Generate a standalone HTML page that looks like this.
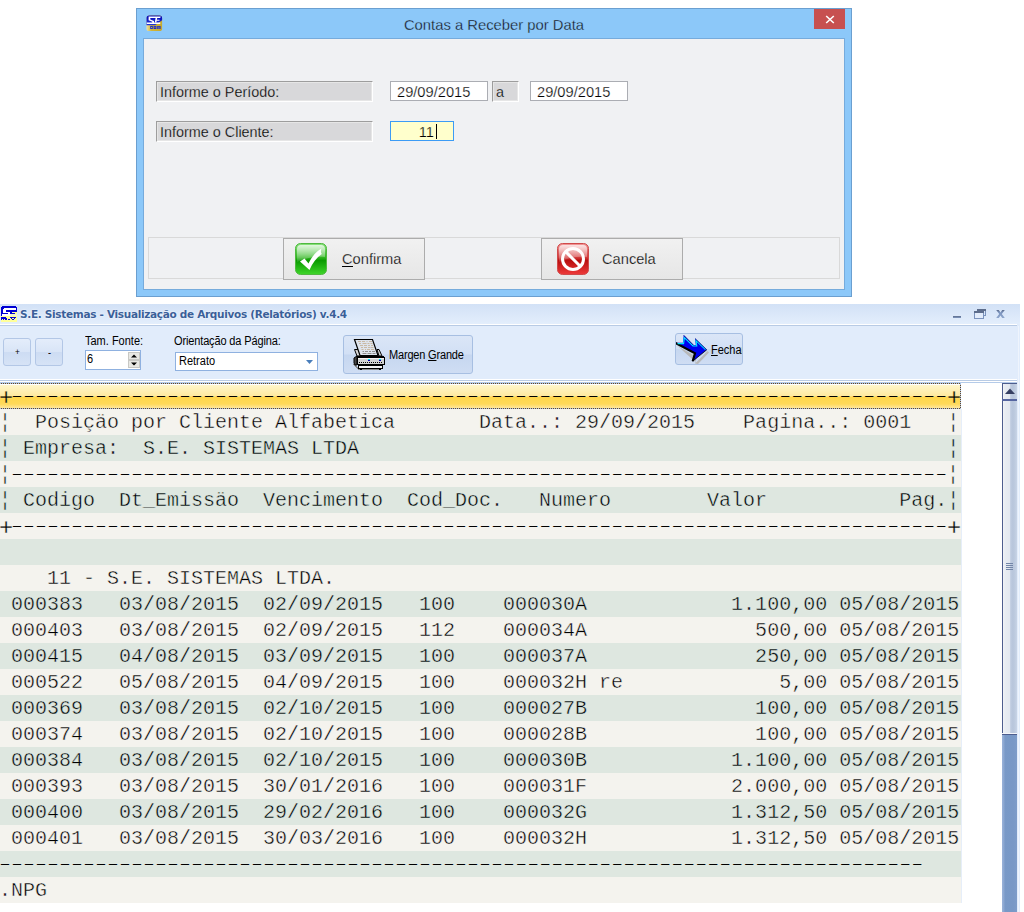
<!DOCTYPE html>
<html lang="pt-BR">
<head>
<meta charset="utf-8">
<title>Contas a Receber por Data</title>
<style>
*{box-sizing:border-box;margin:0;padding:0}
html,body{width:1024px;height:912px;overflow:hidden;background:#fff}
body{position:relative;font-family:"Liberation Sans",Arial,sans-serif;color:#000}
.abs{position:absolute}
/* ---------- dialog ---------- */
#dlg{position:absolute;left:136px;top:8px;width:716px;height:289px;background:#8cc8f9;border:1px solid #6b9fd0}
#dlg .inner{position:absolute;left:6px;top:29px;width:702px;height:252px;background:#f0f1f3;border:1px solid #76abdc}
#dlg .ttl{position:absolute;left:0;top:7px;width:714px;text-align:center;font-size:14.8px;line-height:18px;color:#111;letter-spacing:0;-webkit-text-stroke:0.3px #8cc8f9}
#dlg .close{position:absolute;left:677px;top:0;width:31px;height:20px;background:#c75050}
.sunk{position:absolute;background:#d8d8da;border:1px solid;border-color:#9d9d9d #fff #fff #9d9d9d;box-shadow:inset 1px 1px 0 #e6e6e6, inset -1px -1px 0 #e6e6e6;font-size:14.4px;line-height:21px;padding-left:3px;white-space:nowrap;-webkit-text-stroke:0.25px #d8d8da}
.edit{position:absolute;background:#fff;border:1px solid #abadb3;font-size:14.67px;line-height:20px;white-space:nowrap;-webkit-text-stroke:0.25px #fff}
.panel{position:absolute;border:1px solid #d9d9d9}
.btn{position:absolute;border:1px solid #acacac;background:linear-gradient(#f1f1f1,#e6e6e6);font-size:14.67px}
.btn span{position:absolute;top:11px;line-height:18px;-webkit-text-stroke:0.25px #ebebeb}
.btn u{text-decoration:none;display:inline-block;line-height:13px;border-bottom:1px solid #000}
/* ---------- viewer window ---------- */
#win{position:absolute;left:0;top:304px;width:1020px;height:608px;background:#e1ecfb;overflow:hidden}
#tbar{position:absolute;left:0;top:0;width:1020px;height:20px;background:linear-gradient(#d2e1f6,#e3eefc)}
#tbar .t{position:absolute;left:20px;top:3px;font-family:"DejaVu Sans","Liberation Sans",sans-serif;font-weight:bold;font-size:10.5px;line-height:14px;color:#3a5f99;white-space:nowrap;letter-spacing:-0.31px;text-shadow:0 0 2px #fff}
.lbl{position:absolute;font-size:12px;line-height:13px;white-space:nowrap;color:#000;transform:scaleX(.917);transform-origin:0 0}
.tbtn{position:absolute;border:1px solid #b3c7e6;border-radius:3px;background:linear-gradient(#e4edfb 0%,#d9e5f7 48%,#cddcf3 52%,#d6e3f6 100%)}
#rep{position:absolute;left:0;top:79px;width:1002px;height:529px;background:#fff;overflow:hidden}
.r{position:absolute;left:0;width:961px;height:26px;font-family:"Liberation Mono","DejaVu Sans Mono",monospace;font-size:20px;line-height:28px;white-space:pre;color:#000;text-indent:-1px;overflow:hidden}
.r.c{background:#f4f3ee;-webkit-text-stroke:0.45px #f4f3ee}
.r.g{background:#dee7e0;-webkit-text-stroke:0.45px #dee7e0}
.r.sel{-webkit-text-stroke:0.45px #ffe28a}
.d{display:inline-block;white-space:pre;letter-spacing:-4px;transform:translate(-3px,-0.5px) scale(1.5,0.55);transform-origin:0 13px;text-indent:0;-webkit-text-stroke:0 transparent}
.p{-webkit-text-stroke-width:0.25px;display:inline-block;transform:translate(1px,2px) scale(1.18);transform-origin:50% 50%;text-indent:0}
.r.sel{background:linear-gradient(#fff 0,#fff 2px,#fff6cb 2px,#ffe99f 13px,#ffd64b 14px,#ffd95a 21px,#ffe79c 25px,#fff3c8 26px)}
#fr{position:absolute;left:-1px;top:383px;width:962px;height:26px;background:
 repeating-linear-gradient(90deg,#6b4a1e 0,#6b4a1e 1px,#aac4e8 1px,#aac4e8 2px) 0 0/100% 1px no-repeat,
 repeating-linear-gradient(90deg,#6b4a1e 0,#6b4a1e 1px,#aac4e8 1px,#aac4e8 2px) 0 100%/100% 1px no-repeat,
 repeating-linear-gradient(#6b4a1e 0,#6b4a1e 1px,#aac4e8 1px,#aac4e8 2px) 0 0/1px 100% no-repeat,
 repeating-linear-gradient(#6b4a1e 0,#6b4a1e 1px,#aac4e8 1px,#aac4e8 2px) 100% 0/1px 100% no-repeat}
</style>
</head>
<body>

<!-- ================= dialog ================= -->
<div id="dlg">
  <svg class="abs" style="left:9px;top:6px" width="17" height="17" viewBox="0 0 17 17">
    <defs><linearGradient id="gd" x1="0" y1="0" x2="1" y2="0"><stop offset="0" stop-color="#efe3a4"/><stop offset="0.3" stop-color="#d2b63a"/><stop offset="1" stop-color="#c5a92e"/></linearGradient>
    <linearGradient id="bl" x1="0" y1="0" x2="0" y2="1"><stop offset="0" stop-color="#0208b4"/><stop offset="1" stop-color="#2236dc"/></linearGradient></defs>
    <rect x="0.5" y="0.5" width="15.6" height="15.6" rx="2.6" fill="url(#gd)"/>
    <path d="M0.5 3.1a2.6 2.6 0 0 1 2.6-2.6h10.4a2.6 2.6 0 0 1 2.6 2.6V5.2L9.2 10.2H0.5z" fill="url(#bl)"/>
    <g fill="#fff">
      <path d="M2.6 1.6H14.8L14.2 3.1H4.3V4.5L8 5.9V7.6H14.2V8.9H0.8V7.6H6.3V6.7L2.6 5.3z"/>
      <path d="M9.6 3.1h1.6L10.4 7.6H8.8z M10.9 4.7h2.6v1h-2.8z"/>
    </g>
    <g fill="#1a2ccc"><rect x="4.2" y="11" width="2.6" height="3"/><rect x="7.6" y="11" width="2.8" height="3"/><rect x="11.2" y="11" width="3.4" height="3"/></g>
    <g fill="#d2b63a"><rect x="5" y="12" width="1" height="1"/><rect x="8.5" y="11.8" width="1" height="0.8"/><rect x="12.2" y="11.8" width="1.4" height="0.7"/><rect x="12.2" y="13" width="1.4" height="0.5"/></g>
  </svg>
  <div class="ttl">Contas a Receber por Data</div>
  <div class="close">
    <svg class="abs" style="left:11px;top:6px" width="10" height="9" viewBox="0 0 10 9"><path d="M1.2 1 L8.8 8 M8.8 1 L1.2 8" stroke="#fff" stroke-width="1.6" fill="none"/></svg>
  </div>
  <div class="inner"></div>
</div>

<div class="sunk" style="left:156px;top:81px;width:217px;height:21px">Informe o Período:</div>
<div class="sunk" style="left:156px;top:121px;width:217px;height:21px">Informe o Cliente:</div>
<div class="edit" style="left:390px;top:81px;width:98px;height:20px;padding-left:6px">29/09/2015</div>
<div class="sunk" style="left:492px;top:81px;width:27px;height:21px">a</div>
<div class="edit" style="left:530px;top:81px;width:98px;height:20px;padding-left:6px">29/09/2015</div>
<div class="edit" style="left:390px;top:121px;width:64px;height:20px;border-color:#3c9bf5;background:#ffffcc;text-align:right;padding-right:19px;-webkit-text-stroke-color:#ffffcc">11</div>
<div class="abs" style="left:436px;top:124px;width:1px;height:15px;background:#000"></div>

<div class="panel" style="left:148px;top:237px;width:692px;height:42px"></div>
<div class="btn" style="left:283px;top:238px;width:142px;height:42px">
  <svg class="abs" style="left:11px;top:4px" width="32" height="32" viewBox="0 0 32 32">
    <defs>
      <linearGradient id="gg" x1="0" y1="0" x2="0" y2="1"><stop offset="0" stop-color="#8be27e"/><stop offset="0.45" stop-color="#2fb51f"/><stop offset="0.55" stop-color="#0a9a00"/><stop offset="1" stop-color="#3fd62a"/></linearGradient>
      <linearGradient id="gs" x1="0" y1="0" x2="0" y2="1"><stop offset="0" stop-color="#fff" stop-opacity="0.75"/><stop offset="1" stop-color="#fff" stop-opacity="0.1"/></linearGradient>
    </defs>
    <rect x="0.5" y="0.5" width="31" height="31" rx="5" fill="url(#gg)" stroke="#4fb83f"/>
    <path d="M2 6a4 4 0 0 1 4-4h20a4 4 0 0 1 4 4v8C20 13 10 15 2 19z" fill="url(#gs)"/>
    <path d="M5 18.5 L9.5 15.5 L13.5 20.5 C16.5 14 21 8.5 26.5 5.5 C25.5 8 25.8 9.5 26.8 11 C21.5 14.5 17.5 20 14.5 27 Z" fill="#fff"/>
  </svg>
  <span style="left:58px"><u>C</u>onfirma</span>
</div>
<div class="btn" style="left:541px;top:238px;width:142px;height:42px">
  <svg class="abs" style="left:15px;top:4px" width="32" height="32" viewBox="0 0 32 32">
    <defs>
      <linearGradient id="rg" x1="0" y1="0" x2="0" y2="1"><stop offset="0" stop-color="#f29a9a"/><stop offset="0.45" stop-color="#d23a3a"/><stop offset="0.55" stop-color="#b80f0f"/><stop offset="1" stop-color="#ee3a3a"/></linearGradient>
    </defs>
    <rect x="0.5" y="0.5" width="31" height="31" rx="5" fill="url(#rg)" stroke="#d04a4a"/>
    <path d="M2 6a4 4 0 0 1 4-4h20a4 4 0 0 1 4 4v8C20 13 10 15 2 19z" fill="url(#gs)"/>
    <circle cx="16" cy="16" r="10.5" fill="none" stroke="#fff" stroke-width="3"/>
    <path d="M8.8 8.8 L23.2 23.2" stroke="#fff" stroke-width="3"/>
  </svg>
  <span style="left:60px">Cancela</span>
</div>

<!-- ================= viewer window ================= -->
<div id="win">
  <div id="tbar">
    <svg class="abs" style="left:1px;top:2px" width="16" height="16" viewBox="0 0 16 16" shape-rendering="crispEdges">
      <rect x="0" y="5" width="16" height="11" fill="#ffff99"/>
      <path d="M1 0h14v1h1v5H11v4H0V1h1z" fill="#0000d4"/>
      <path d="M3 2h12v2H11v0H5v2h4v4H1V8h6V7H2V3h1z" fill="#fff"/>
      <path d="M10 5h5v1h-5z M10 7h4v1h-4z" fill="#0000d4"/>
      <path d="M9 8h7v2H9z" fill="#f4f4d0"/>
      <path d="M0 11h5v1h1v2H0z" fill="#0000d4"/>
      <path d="M7 13h2v1H7z M9 11h6v1H9z M10 12h1v1h-1z M13 12h1v1h-1z M11 13h1v1h-1z M12 13h1v1h-1z" fill="#0000d4"/>
      <path d="M1 13h1v1H1z M3 13h1v1H3z" fill="#ffff99"/>
    </svg>
    <div class="t">S.E. Sistemas - Visualização de Arquivos (Relatórios) v.4.4</div>
    <!-- window controls -->
    <div class="abs" style="left:953px;top:12px;width:8px;height:2px;background:linear-gradient(#5d6d8c,#8098c0)"></div>
    <svg class="abs" style="left:974px;top:5px" width="12" height="10" viewBox="0 0 12 10" shape-rendering="crispEdges">
      <rect x="3.5" y="0.5" width="8" height="6" fill="none" stroke="#7b93bd"/><rect x="3" y="0" width="9" height="2" fill="#5d6d8c"/>
      <rect x="0.5" y="2.5" width="9" height="7" fill="#e2ecfb" stroke="#7b93bd"/><rect x="0" y="2" width="10" height="2" fill="#5d6d8c"/>
    </svg>
    <svg class="abs" style="left:996px;top:6px" width="9" height="8" viewBox="0 0 9 8"><defs><linearGradient id="xg" x1="0" y1="0" x2="0" y2="1"><stop offset="0" stop-color="#5d6d8c"/><stop offset="0.3" stop-color="#7b93bd"/><stop offset="1" stop-color="#8ea6cc"/></linearGradient></defs><path d="M0.2 0H2.8L4.5 2.6 6.2 0H8.8L5.8 4 8.8 8H6.2L4.5 5.4 2.8 8H0.2L3.2 4z" fill="url(#xg)"/></svg>
  </div>
  <div class="abs" style="left:0;top:20px;width:1017px;height:1px;background:#fff"></div>
  <div class="abs" style="left:0;top:21px;width:1017px;height:1px;background:#b8cbe5"></div>

  <!-- toolbar -->
  <div class="tbtn" style="left:3px;top:34px;width:28px;height:28px"><div class="lbl" style="left:11px;top:7px;font-size:9px">+</div></div>
  <div class="tbtn" style="left:35px;top:34px;width:28px;height:28px"><div class="lbl" style="left:12px;top:7px;font-size:10px">-</div></div>
  <div class="lbl" style="left:85px;top:31px">Tam. Fonte:</div>
  <div class="abs" style="left:85px;top:46px;width:56px;height:20px;background:#fff;border:1px solid #8fb1e0">
    <div class="lbl" style="left:1px;top:2px">6</div>
    <div class="abs" style="left:42px;top:1px;width:12px;height:8px;background:#e8e8e4;border:1px solid #c8c8c4"></div>
    <div class="abs" style="left:42px;top:9px;width:12px;height:8px;background:#e8e8e4;border:1px solid #c8c8c4"></div>
    <svg class="abs" style="left:45px;top:3px" width="6" height="12" viewBox="0 0 6 12"><path d="M0 3.5 L3 0.5 L6 3.5z M0 8.5 L3 11.5 L6 8.5z" fill="#000"/></svg>
  </div>
  <div class="lbl" style="left:174px;top:31px;letter-spacing:-0.15px">Orientação da Página:</div>
  <div class="abs" style="left:175px;top:48px;width:143px;height:19px;background:#fff;border:1px solid #8fb1e0">
    <div class="lbl" style="left:3px;top:2px">Retrato</div>
    <svg class="abs" style="left:130px;top:7px" width="7" height="4" viewBox="0 0 7 4"><path d="M0 0h7L3.5 4z" fill="#4a7ebb"/></svg>
  </div>
  <div class="tbtn" style="left:343px;top:31px;width:130px;height:39px;background:linear-gradient(#dbe6f7 0%,#d2e0f5 48%,#c6d7f0 52%,#cfddf3 100%);border-color:#a7bfe2">
    <svg class="abs" style="left:9px;top:2px" width="33" height="33" viewBox="0 0 33 33" shape-rendering="crispEdges">
      <!-- shadow -->
      <path d="M0 26 L5 32 L28 32 L28 30 L5 30 L1 25z" fill="#8c8c8c"/>
      <!-- left tray -->
      <path d="M1.5 11.5h4.5l1.5 6.5h-3.5z" fill="#d6d6d6" stroke="#000" shape-rendering="auto"/>
      <path d="M24 11.5h2l3 6.5h-3z" fill="#d6d6d6" stroke="#000" shape-rendering="auto"/>
      <!-- paper -->
      <path d="M1.5 1.5 H19.5 L25 17.5 H7z" fill="#dde3ec" stroke="#000" stroke-width="1.2" shape-rendering="auto"/>
      <g stroke="#c9b9a4" stroke-width="1" shape-rendering="auto">
        <path d="M5 3.5h3M9 3.5h3M13.5 3.5h1M16 3.5h3"/>
        <path d="M6 5.5h2M9.5 5.5h4M14.5 5.5h2M17.5 5.5h2"/>
        <path d="M7 7.5h3M11 7.5h3M15 7.5h2M18 7.5h2"/>
        <path d="M8 9.5h2M11 9.5h3M15 9.5h2M17.5 9.5h3"/>
        <path d="M8.5 11.5h2M12 11.5h1M14 11.5h3M18 11.5h3"/>
      </g>
      <g stroke="#8e8e8e" stroke-width="1" shape-rendering="auto">
        <path d="M9.5 13.5h1.5M12 13.5h3M16 13.5h2M19 13.5h3"/>
        <path d="M9.5 15.5h4M14.5 15.5h4M19.5 15.5h3"/>
      </g>
      <!-- body -->
      <path d="M4 18 H31 V19 H4z" fill="#000"/>
      <path d="M1 20 L4 18 L4 27 L2 27 L1 25z" fill="#4a4a4a" stroke="#000" shape-rendering="auto"/>
      <rect x="4.5" y="19.5" width="27" height="7" fill="#d2d2d2" stroke="#000"/>
      <rect x="5" y="20" width="26" height="1" fill="#f4f4f4"/>
      <rect x="15" y="21" width="2" height="1" fill="#00e4ff"/><rect x="15" y="22" width="2" height="1" fill="#0000a8"/>
      <rect x="26" y="21" width="2" height="1" fill="#00e4ff"/><rect x="26" y="22" width="2" height="1" fill="#0000a8"/>
      <path d="M6 24.5h24" stroke="#000" stroke-width="1" stroke-dasharray="1 1"/>
      <!-- base -->
      <rect x="5.5" y="27.5" width="24" height="3" fill="#f2f2f2" stroke="#000"/>
      <rect x="7" y="31" width="2" height="1" fill="#000"/><rect x="26" y="31" width="2" height="1" fill="#000"/>
    </svg>
    <div class="lbl" style="left:45px;top:13px;letter-spacing:-0.2px">Margen <u>G</u>rande</div>
  </div>
  <div class="tbtn" style="left:675px;top:29px;width:68px;height:32px;overflow:hidden;background:linear-gradient(#dbe6f7 0%,#d2e0f5 48%,#c6d7f0 52%,#cfddf3 100%);border-color:#a7bfe2">
    <svg class="abs" style="left:-2px;top:-1px" width="38" height="34" viewBox="0 0 38 34">
      <path d="M3 12.5 L20 22.5 L23 22.8 L21 30.5 L24 31 L35 19.5 L33.5 18 L22 29.5z" fill="#b9b9b9"/>
      <path d="M1.1 9.8 L8.9 9.8 L9.7 2.2 L19.4 12.1 L21.8 12.1 L21 5.5 L32.7 16.8 L18.7 28.2 L21 20.3z" fill="#0000f0"/>
      <path d="M1.1 9.8 L21 20.3 L18.7 28.2" fill="none" stroke="#000" stroke-width="2.2" stroke-linejoin="miter"/>
      <path d="M18.7 28.2 L32.7 16.8" fill="none" stroke="#000" stroke-width="0.8"/>
      <path d="M3.5 10.6 L9.6 10.6 L10.3 4.6 L19 13 L22.8 13 L22 7.5 L31.5 16.6" fill="none" stroke="#00e8ff" stroke-width="1.1"/>
      <path d="M9.7 2.2 L19.4 12.1 M21 5.5 L32.7 16.8" fill="none" stroke="#00007a" stroke-width="0.8"/>
    </svg>
    <div class="lbl" style="left:35px;top:10px"><u>F</u>echar</div>
  </div>

  <div class="abs" style="left:0;top:75px;width:1017px;height:1px;background:#fff"></div>
  <div class="abs" style="left:0;top:76px;width:1017px;height:1px;background:#b8cbe5"></div>
  <div class="abs" style="left:0;top:77px;width:1017px;height:1px;background:#fff"></div>
  <div class="abs" style="left:0;top:78px;width:1017px;height:1px;background:#b5cbe9"></div>
  <div id="rep"></div>
</div>

<!-- report rows are placed in page coordinates -->
<div class="r sel" style="top:383px"><span class="p">+</span><span class="d" style="width:936px">------------------------------------------------------------------------------</span><span class="p">+</span></div>
<div class="r c" style="top:409px">¦  Posiçäo por Cliente Alfabetica       Data..: 29/09/2015    Pagina..: 0001   ¦</div>
<div class="r g" style="top:435px">¦ Empresa:  S.E. SISTEMAS LTDA                                                 ¦</div>
<div class="r c" style="top:461px">¦<span class="d" style="width:936px">------------------------------------------------------------------------------</span>¦</div>
<div class="r g" style="top:487px">¦ Codigo  Dt_Emissäo  Vencimento  Cod_Doc.   Numero        Valor           Pag.¦</div>
<div class="r c" style="top:513px"><span class="p">+</span><span class="d" style="width:936px">------------------------------------------------------------------------------</span><span class="p">+</span></div>
<div class="r g" style="top:539px"></div>
<div class="r c" style="top:565px">    11 - S.E. SISTEMAS LTDA.</div>
<div class="r g" style="top:591px"> 000383   03/08/2015  02/09/2015   100    000030A            1.100,00 05/08/2015</div>
<div class="r c" style="top:617px"> 000403   03/08/2015  02/09/2015   112    000034A              500,00 05/08/2015</div>
<div class="r g" style="top:643px"> 000415   04/08/2015  03/09/2015   100    000037A              250,00 05/08/2015</div>
<div class="r c" style="top:669px"> 000522   05/08/2015  04/09/2015   100    000032H re             5,00 05/08/2015</div>
<div class="r g" style="top:695px"> 000369   03/08/2015  02/10/2015   100    000027B              100,00 05/08/2015</div>
<div class="r c" style="top:721px"> 000374   03/08/2015  02/10/2015   100    000028B              100,00 05/08/2015</div>
<div class="r g" style="top:747px"> 000384   03/08/2015  02/10/2015   100    000030B            1.100,00 05/08/2015</div>
<div class="r c" style="top:773px"> 000393   03/08/2015  30/01/2016   100    000031F            2.000,00 05/08/2015</div>
<div class="r g" style="top:799px"> 000400   03/08/2015  29/02/2016   100    000032G            1.312,50 05/08/2015</div>
<div class="r c" style="top:825px"> 000401   03/08/2015  30/03/2016   100    000032H            1.312,50 05/08/2015</div>
<div class="r g" style="top:851px"><span class="d" style="width:924px">-----------------------------------------------------------------------------</span></div>
<div class="r c" style="top:877px">.NPG</div>
<div id="fr"></div>
<div class="abs" style="left:961px;top:409px;width:1px;height:494px;background:#e6eef9"></div>

<!-- scrollbar -->
<div class="abs" style="left:1002px;top:383px;width:15px;height:529px;background:linear-gradient(90deg,#9bb3d9 0,#8aa6d0 2px,#7999c7 3px,#7898c6 11px,#7d9cc9 15px)"></div>
<div class="abs" style="left:1002px;top:400px;width:15px;height:335px;background:linear-gradient(90deg,#4d5d8d 0,#4d5d8d 1px,#f1f3f7 1px,#e8ecf2 3px,#e3e8f0 7.5px,#c4d0e3 8.5px,#b8c6dc 10px,#bac8dd 12px,#c8d4e6 15px);border-bottom:1px solid #4d5d8d;box-shadow:inset 0 -1px 0 #f4f6fa"></div>
<div class="abs" style="left:1002px;top:383px;width:15px;height:18px;background:linear-gradient(90deg,#4d5d8d 0,#4d5d8d 1px,#f1f3f7 1px,#e8ecf2 3px,#e3e8f0 7.5px,#c4d0e3 8.5px,#b8c6dc 10px,#bac8dd 12px,#c8d4e6 15px);border-top:1px solid #4d5d8d;border-bottom:2px solid #5565a0"></div>
<svg class="abs" style="left:1005px;top:388px" width="10" height="6" viewBox="0 0 10 6"><path d="M0 6 L5 0.5 L10 6z" fill="#353f62"/></svg>
<div class="abs" style="left:1006px;top:563px;width:7px;height:7px;background:repeating-linear-gradient(#7386a8 0,#7386a8 1px,transparent 1px,transparent 2px)"></div>
<div class="abs" style="left:1018px;top:326px;width:1px;height:586px;background:#eef4fd"></div>

</body>
</html>
